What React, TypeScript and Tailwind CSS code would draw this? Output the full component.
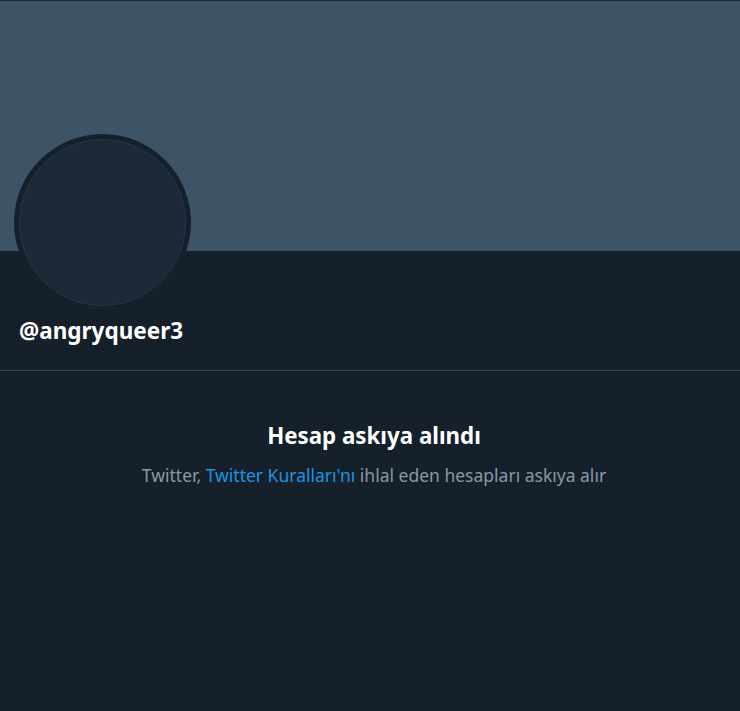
import React from 'react';

const App: React.FC = () => {
  return (
    <div
      className="w-[740px] h-[711px] bg-[#15202b] flex flex-col"
      style={{ fontFamily: '"Noto Sans", "Open Sans", sans-serif' }}
    >
      <div className="h-px bg-[#1a2633]" />
      <div className="h-[250px] bg-[#3d5466]" />

      <div className="px-[14px] -mt-[117px]">
        <div className="w-[177px] h-[177px] rounded-full bg-[#15202b] flex items-center justify-center">
          <div className="w-[167px] h-[167px] rounded-full bg-[#1c2938] border border-[#25364a]" />
        </div>
      </div>

      <div className="px-[19px] pt-[5px] h-[59px]">
        <h1 className="text-[22.5px] font-bold text-white leading-[30px]">@angryqueer3</h1>
      </div>

      <div className="h-px bg-[#38444d]" />

      <div className="flex flex-col items-center pt-[50px] pl-2">
        <h2 className="text-[22.3px] font-bold text-white leading-[30px]">Hesap askıya alındı</h2>
        <p className="mt-[12px] text-[17.5px] text-[#8899a6] leading-[24px]">
          Twitter, <span className="text-[#1b95e0]">Twitter Kuralları'nı</span> ihlal eden hesapları askıya alır
        </p>
      </div>
    </div>
  );
};

export default App;
